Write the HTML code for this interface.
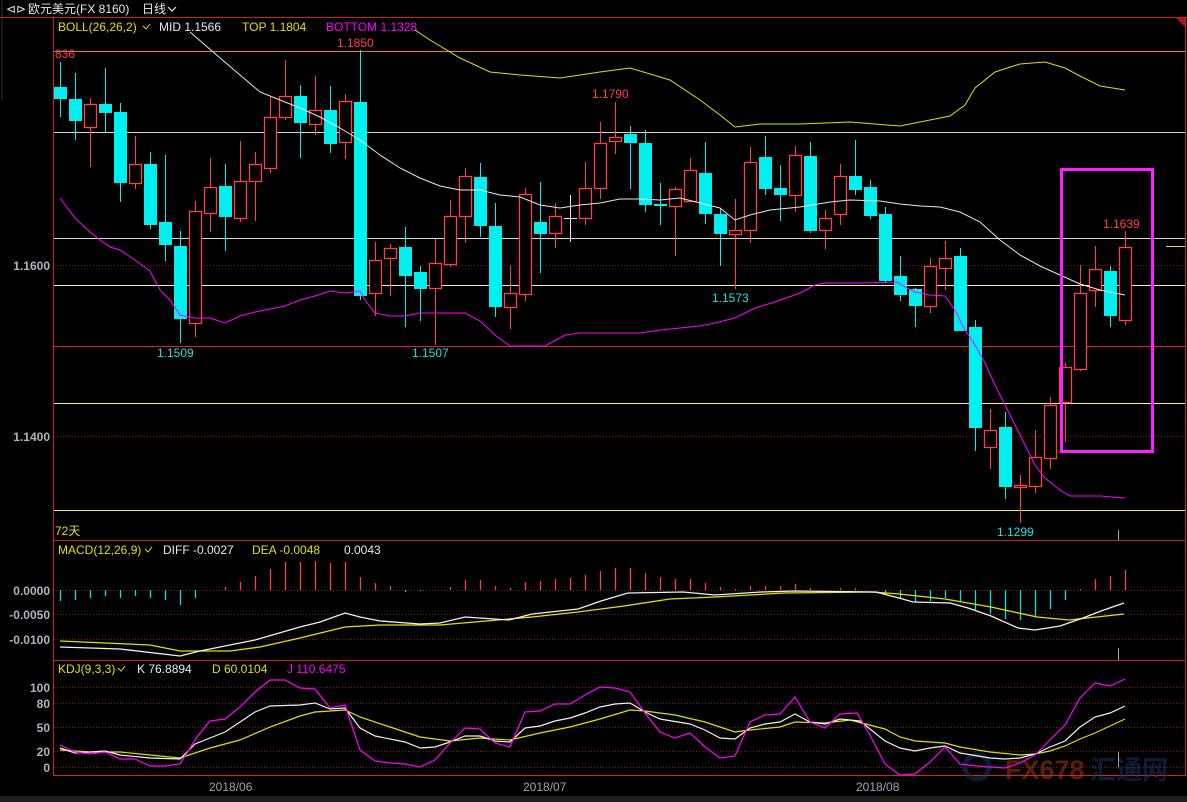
<!DOCTYPE html>
<html><head><meta charset="utf-8">
<style>
html,body{margin:0;padding:0;background:#000;width:1187px;height:802px;overflow:hidden}
svg{display:block}
text{font-family:"Liberation Sans","Noto Sans CJK SC",sans-serif;font-size:12px}
</style></head>
<body>
<svg id="s" width="1187" height="802" viewBox="0 0 1187 802" xmlns="http://www.w3.org/2000/svg">
<rect width="1187" height="802" fill="#000"/>
<rect x="0" y="796" width="1187" height="6" fill="#1e1e1e"/>
<line x1="2" y1="0" x2="2" y2="100" stroke="#333" stroke-width="1"/>
<!-- top bar -->
<text x="6" y="13" fill="#e0e0e0">⊲⊳</text>
<text x="28" y="13" fill="#e8e8e8">欧元美元(FX 8160)</text>
<text x="142" y="13" fill="#e8e8e8">日线</text>
<path d="M168 7 l4 4 l4 -4" stroke="#e8e8e8" fill="none" stroke-width="1.2"/>
<line x1="0" y1="17.5" x2="1187" y2="17.5" stroke="#c81e1e"/>
<polygon points="1176,18 1186,18 1186,28" fill="#b01010"/>
<!-- frame -->
<line x1="53.5" y1="17" x2="53.5" y2="776" stroke="#c81e1e"/>
<line x1="1185.5" y1="17" x2="1185.5" y2="776" stroke="#c81e1e"/>
<line x1="53" y1="540.5" x2="1186" y2="540.5" stroke="#c81e1e"/>
<line x1="53" y1="660.5" x2="1186" y2="660.5" stroke="#c81e1e"/>
<line x1="53" y1="775.5" x2="1186" y2="775.5" stroke="#e01e1e"/>
<!-- main horizontal lines -->
<line x1="54" y1="51.5" x2="1185" y2="51.5" stroke="#e8784e"/>
<line x1="54" y1="132.5" x2="1185" y2="132.5" stroke="#d8d8d8"/>
<line x1="54" y1="238.5" x2="1185" y2="238.5" stroke="#d8d8d8"/>
<line x1="54" y1="285.5" x2="1185" y2="285.5" stroke="#f0f0a0"/>
<line x1="54" y1="346.5" x2="1185" y2="346.5" stroke="#e01e1e"/>
<line x1="54" y1="403.5" x2="1185" y2="403.5" stroke="#f0f0a0"/>
<line x1="54" y1="510.5" x2="1185" y2="510.5" stroke="#f0f060"/>
<line x1="1166" y1="246.5" x2="1185" y2="246.5" stroke="#e0e040"/>
<g stroke="#8a1818" stroke-dasharray="1,2">
<line x1="54" y1="265.5" x2="1185" y2="265.5"/>
<line x1="54" y1="436.5" x2="1185" y2="436.5"/>
<line x1="54" y1="590.5" x2="1185" y2="590.5"/>
<line x1="54" y1="614.5" x2="1185" y2="614.5"/>
<line x1="54" y1="639.5" x2="1185" y2="639.5"/>
<line x1="54" y1="687.5" x2="1185" y2="687.5"/>
<line x1="54" y1="703.5" x2="1185" y2="703.5"/>
<line x1="54" y1="727.5" x2="1185" y2="727.5"/>
<line x1="54" y1="751.5" x2="1185" y2="751.5"/>
<line x1="54" y1="767.5" x2="1185" y2="767.5"/>
</g>
<!-- axis labels -->
<g fill="#b0b4bc" font-weight="bold" text-anchor="end">
<text x="50" y="270">1.1600</text>
<text x="50" y="441">1.1400</text>
<text x="50" y="595">0.0000</text>
<text x="50" y="619">-0.0050</text>
<text x="50" y="644">-0.0100</text>
<text x="50" y="692">100</text>
<text x="50" y="708">80</text>
<text x="50" y="732">50</text>
<text x="50" y="756">20</text>
<text x="50" y="772">0</text>
</g>
<g fill="#a0a4ac">
<text x="209" y="791">2018/06</text>
<text x="523" y="791">2018/07</text>
<text x="856" y="791">2018/08</text>
</g>
<!-- watermark -->
<g opacity="0.5">
<circle cx="977" cy="767" r="12" fill="none" stroke="#1a3a6a" stroke-width="5"/>
<text x="1005" y="779" fill="#b04010" style="font-size:27px;font-weight:bold">FX678</text>
<text x="1090" y="779" fill="#1a3a6a" style="font-size:26px;font-weight:bold">汇通网</text>
</g>
<!-- headers -->
<text x="58" y="31" fill="#e0e000">BOLL(26,26,2)</text>
<path d="M143 26 l3 3 l4 -5" stroke="#e0e000" fill="none"/>
<text x="159" y="31" fill="#e8e8f0">MID 1.1566</text>
<text x="242" y="31" fill="#e0e000">TOP 1.1804</text>
<text x="326" y="31" fill="#ff00ff">BOTTOM 1.1328</text>
<text x="58" y="554" fill="#e0e000">MACD(12,26,9)</text>
<path d="M145 549 l3 3 l4 -5" stroke="#e0e000" fill="none"/>
<text x="163" y="554" fill="#e8e8f0">DIFF -0.0027</text>
<text x="252" y="554" fill="#e0e000">DEA -0.0048</text>
<text x="344" y="554" fill="#e8e8f0">0.0043</text>
<text x="58" y="673" fill="#e0e000">KDJ(9,3,3)</text>
<path d="M118 668 l3 3 l4 -5" stroke="#e0e000" fill="none"/>
<text x="137" y="673" fill="#e8e8f0">K 76.8894</text>
<text x="212" y="673" fill="#e0e000">D 60.0104</text>
<text x="287" y="673" fill="#ff00ff">J 110.6475</text>
<text x="55" y="535" fill="#e0e000">72天</text>
<!-- price labels -->
<g fill="#ff4040">
<text x="55" y="58">836</text>
<text x="337" y="47">1.1850</text>
<text x="592" y="98">1.1790</text>
<text x="1103" y="228">1.1639</text>
</g>
<g fill="#20e0e0">
<text x="157" y="357">1.1509</text>
<text x="412" y="357">1.1507</text>
<text x="712" y="302">1.1573</text>
<text x="997" y="536">1.1299</text>
</g>
<g id="candles"></g>
<g id="hist"></g>
<!-- BOLL -->
<polyline fill="none" stroke="#e0e000" points="415,30 430,40 460,58 490,72 520,75 560,78 600,72 630,68 670,80 700,100 720,115 735,127 760,124 800,124 850,122 900,126 930,120 950,116 965,105 975,88 995,72 1020,64 1045,62 1065,68 1080,76 1100,86 1125,90"/>
<polyline fill="none" stroke="#e8e8e8" points="190,32 205,45 240,75 260,92 280,100 300,108 320,117 340,128 360,140 380,155 400,168 420,178 440,186 460,190 480,190 500,195 520,197 540,205 560,208 580,205 600,203 620,199 640,199 660,200 680,198 700,203 720,208 735,220 750,215 770,210 800,207 830,202 850,200 880,201 900,204 920,206 940,207 960,212 980,222 1000,240 1020,255 1040,266 1060,275 1080,284 1100,290 1125,295"/>
<polyline fill="none" stroke="#ff00ff" points="60,198 75,218 90,232 100,240 110,247 120,250 135,260 150,271 160,290 170,300 180,315 195,318 210,318 225,323 240,316 255,312 270,309 285,306 300,300 315,296 330,291 345,293 360,291 365,300 375,313 390,316 405,316 420,313 435,313 465,313 480,321 495,335 510,346 545,346 565,335 580,333 640,333 660,330 670,329 700,326 715,323 735,318 755,308 775,302 800,293 815,285 825,283 860,283 897,282 905,287 915,292 930,295 945,296 955,310 965,330 975,345 985,363 995,385 1005,405 1015,425 1025,445 1035,465 1045,478 1060,490 1070,496 1100,496 1125,498"/>
<!-- MACD lines -->
<polyline fill="none" stroke="#e0e000" stroke-width="1.3" points="60,641 150,645 180,651 230,651 260,647 300,638 345,627 380,625 440,625 486,621 532,617 578,612 624,606 670,599 715,597 784,593 872,592 899,594 945,599 991,607 1037,617 1069,620 1124,614"/>
<polyline fill="none" stroke="#f0f0f0" stroke-width="1.3" points="60,647 120,649 180,656 200,651 255,640 300,627 320,622 345,613 360,617 380,621 420,624 440,623 465,617 509,620 532,614 578,609 601,601 628,593 683,592 715,595 761,592 794,591 876,592 899,598 913,602 950,603 968,608 991,616 1018,628 1035,630 1060,626 1083,618 1101,611 1124,603"/>
<!-- KDJ -->
<polyline fill="none" stroke="#e0e000" stroke-width="1.2" points="60,750 90,752 120,752 150,755 180,758 210,748 240,740 270,727 300,716 315,712 345,710 360,717 390,727 420,737 450,741 480,738 510,740 540,733 570,727 600,719 630,710 645,711 675,715 705,722 735,732 750,730 780,727 795,722 825,723 850,720 885,729 900,737 915,741 945,743 960,747 990,752 1020,755 1035,754 1050,751 1065,746 1080,739 1095,733 1110,726 1125,719"/>
<polyline fill="none" stroke="#f0f0f0" stroke-width="1.2" points="60,748 75,753 90,752 105,751 120,755 150,758 180,759 195,744 210,738 225,732 240,722 255,712 270,706 300,705 315,703 330,709 345,708 360,728 375,736 405,742 420,748 435,747 450,742 465,736 480,736 495,741 510,742 525,728 540,726 555,721 570,718 585,713 600,707 615,704 630,703 645,712 660,719 690,724 705,730 720,738 735,739 750,728 765,724 780,722 795,714 810,722 825,724 840,719 860,721 885,741 900,748 915,751 930,748 945,746 960,753 990,758 1005,759 1020,758 1035,754 1050,747 1065,741 1080,727 1095,717 1110,713 1125,706"/>
<polyline fill="none" stroke="#ff00ff" stroke-width="1.2" points="60,745 75,752 90,754 105,752 120,759 135,759 150,766 165,766 180,764 197,737 210,721 225,719 240,707 255,692 270,680 285,680 300,688 315,689 330,708 345,705 360,750 375,761 390,763 405,764 420,767 435,760 450,743 465,728 480,729 495,743 510,747 525,712 540,711 555,704 570,704 585,695 600,687 615,688 630,692 645,713 660,732 675,738 690,733 705,747 720,758 735,756 750,722 765,715 780,714 795,697 810,722 825,728 840,714 857,713 870,735 885,764 900,775 915,774 930,762 945,747 960,764 977,766 990,767 1005,768 1020,763 1035,755 1050,740 1065,725 1080,698 1095,683 1110,686 1125,679"/>
<!-- magenta box -->
<rect x="1061.5" y="169.5" width="91" height="282" fill="none" stroke="#ff20ff" stroke-width="3"/>
<line x1="1118.5" y1="530" x2="1118.5" y2="540" stroke="#aaa"/>
<line x1="1118.5" y1="648" x2="1118.5" y2="660" stroke="#aaa"/>
<line x1="1118.5" y1="752" x2="1118.5" y2="767" stroke="#aaa"/>
</svg>
<script>
var C=[
[60,62,117,87,99,0],[75,73,140,99,121,0],[90,98,167,104,127,1],[105,68,133,104,113,0],[120,103,202,112,183,0],
[135,136,189,164,183,1],[150,152,229,164,225,0],[165,155,261,222,245,0],[180,231,343,246,319,0],[195,201,337,211,323,1],
[210,158,232,187,213,1],[225,164,251,186,217,0],[240,141,222,181,218,1],[255,152,221,164,181,1],[270,97,173,117,168,1],
[285,60,120,96,117,1],[300,85,158,96,123,0],[315,76,135,110,124,1],[330,86,153,110,144,0],[345,94,159,101,142,1],
[360,50,300,102,296,0],[375,242,316,260,293,1],[390,244,296,248,258,1],[405,227,327,247,276,0],[420,266,321,272,289,0],
[435,239,345,263,288,1],[450,200,267,216,264,1],[465,168,243,176,216,1],[480,163,237,177,226,0],[495,203,317,226,307,0],
[510,266,329,293,307,1],[525,188,301,194,294,1],[540,182,273,222,234,0],[555,203,248,216,233,1],[570,195,242,218,218,2],
[585,162,225,188,218,1],[600,122,199,143,188,1],[615,102,154,137,141,1],[630,126,189,134,143,0],[645,130,212,143,205,0],
[660,183,225,204,206,0],[675,187,256,189,206,1],[690,158,202,170,201,1],[705,142,224,173,214,0],[720,209,266,214,234,0],
[735,199,289,230,234,1],[750,147,243,162,230,1],[765,136,195,157,189,0],[780,165,221,188,195,0],[795,146,212,155,195,1],
[810,142,233,156,231,0],[825,210,249,218,230,1],[840,164,225,176,214,1],[855,140,195,176,190,0],[870,180,219,187,216,0],
[885,207,283,214,281,0],[900,256,301,276,295,0],[915,288,327,289,306,0],[930,258,313,266,306,1],[945,241,290,258,268,1],
[960,248,331,256,331,0],[975,320,451,327,428,0],[990,409,469,430,447,1],[1005,412,499,427,487,0],[1020,475,523,485,487,1],
[1035,430,493,457,486,1],[1050,397,469,405,458,1],[1065,363,442,367,402,1],[1080,265,371,293,369,1],[1095,246,307,269,290,1],
[1110,266,327,271,316,0],[1125,231,325,247,320,1]];
var NS="http://www.w3.org/2000/svg",g=document.getElementById("candles"),h=document.getElementById("hist");
function el(p,t,a){var e=document.createElementNS(NS,t);for(var k in a)e.setAttribute(k,a[k]);p.appendChild(e);return e;}
C.forEach(function(c){var x=c[0],col=c[5]==0?"#00f0f0":(c[5]==1?"#ff4040":"#e8e8e8");
el(g,"line",{x1:x+.5,y1:c[1],x2:x+.5,y2:c[2],stroke:col});
if(c[5]==0)el(g,"rect",{x:x-6,y:c[3],width:13,height:Math.max(1,c[4]-c[3]),fill:col});
else if(c[5]==2)el(g,"line",{x1:x-6,y1:c[3]+.5,x2:x+7,y2:c[3]+.5,stroke:col});
else el(g,"rect",{x:x-5.5,y:c[3]+.5,width:12,height:Math.max(1,c[4]-c[3]),fill:"#000",stroke:col,"stroke-width":1.3});});
var H=[[60,601],[75,600],[90,598],[105,596],[120,598],[135,596],[150,598],[165,600],[180,605],[195,598],[210,590],
[225,587],[240,582],[255,576],[270,569],[285,562],[300,562],[315,561],[330,563],[345,562],[360,577],[375,583],[390,586],
[405,592],[420,591],[435,590],[450,587],[465,580],[480,580],[495,586],[510,588],[525,582],[540,581],[555,579],[570,578],
[585,575],[600,571],[615,568],[630,568],[645,573],[660,577],[675,579],[690,579],[705,583],[720,587],[735,589],[750,586],
[765,586],[780,586],[795,584],[810,588],[825,590],[840,588],[855,588],[870,590],[885,594],[900,599],[915,602],[930,601],
[945,598],[960,601],[975,610],[990,614],[1005,619],[1020,620],[1035,617],[1050,609],[1065,600],[1080,589],[1095,579],
[1110,576],[1125,570]];
H.forEach(function(b){if(b[1]==590)return;var up=b[1]<590;
el(h,"line",{x1:b[0]+.5,y1:590,x2:b[0]+.5,y2:b[1],stroke:up?"#ff4040":"#00e0e8","stroke-width":1.3});});
</script>
</body></html>
